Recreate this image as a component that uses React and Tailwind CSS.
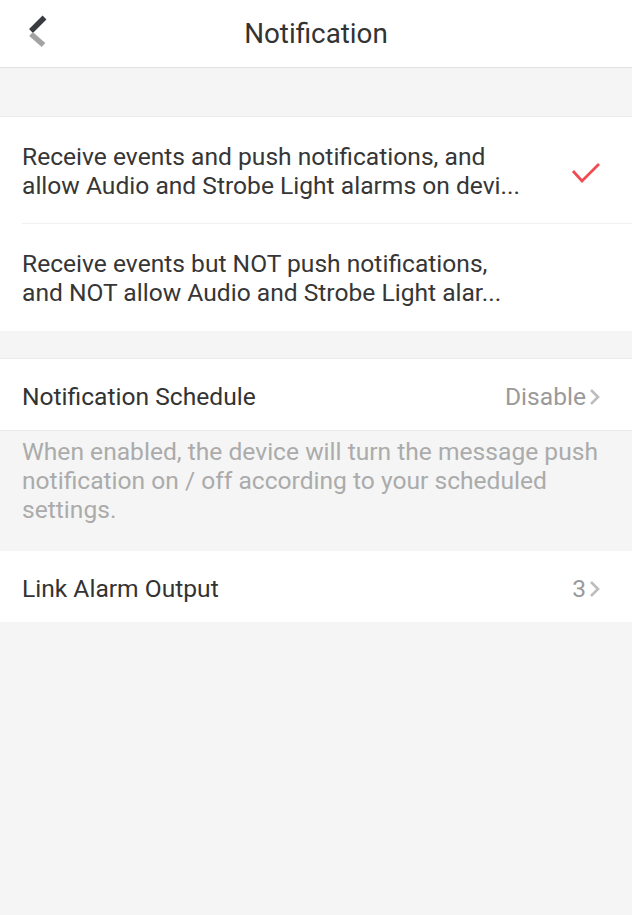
import React from "react";

const Chevron = () => (
  <svg width="14" height="20" viewBox="0 0 14 20" className="ml-[2px]">
    <path d="M3 3 L10 10 L3 17" fill="none" stroke="#bdbdbd" strokeWidth="2.6" />
  </svg>
);

const OptionRow = ({ lines, checked, divider }) => (
  <div className="relative flex h-[107px] items-center bg-white pl-[22px] pr-[30px]">
    <p className="flex-1 text-[24.6px] leading-[29px] text-[#363636]">
      {lines[0]}
      <br />
      {lines[1]}
    </p>
    {checked && (
      <svg width="32" height="28" viewBox="0 0 32 28">
        <path d="M3 14 L12 24 L29 7" fill="none" stroke="#f04b51" strokeWidth="2.8" />
      </svg>
    )}
    {divider && <div className="absolute bottom-0 left-[22px] right-0 h-px bg-[#f1f1f1]" />}
  </div>
);

const App = () => {
  return (
    <div className="min-h-[915px] bg-[#f5f5f5] font-['Roboto',sans-serif]">
      {/* header */}
      <header className="relative flex h-[68px] items-center justify-center border-b border-[#e2e2e2] bg-white">
        <svg width="24" height="34" viewBox="0 0 24 34" className="absolute left-[25px] top-[15px]">
          <path d="M19.5 2.5 L6 16" stroke="#3a3b40" strokeWidth="5.5" />
          <path d="M6 19 L18.5 30" stroke="#a3a3a6" strokeWidth="5.5" />
        </svg>
        <h1 className="text-[27.8px] text-[#333]">Notification</h1>
      </header>

      <div className="h-[49px] border-b border-[#ebebeb]" />

      <OptionRow
        checked
        divider
        lines={[
          "Receive events and push notifications, and",
          "allow Audio and Strobe Light alarms on devi...",
        ]}
      />
      <OptionRow
        lines={[
          "Receive events but NOT push notifications,",
          "and NOT allow Audio and Strobe Light alar...",
        ]}
      />

      <div className="h-[28px] border-b border-[#ebebeb]" />

      <div className="flex h-[72px] items-center justify-between border-b border-[#e8e8e8] bg-white pl-[22px] pr-[30px] pt-[5px]">
        <span className="text-[24.6px] text-[#333]">Notification Schedule</span>
        <div className="flex items-center">
          <span className="text-[24.6px] text-[#9a9a9a]">Disable</span>
          <Chevron />
        </div>
      </div>

      <p className="h-[120px] px-[22px] pt-[6px] text-[24.6px] leading-[29px] text-[#ababab]">
        When enabled, the device will turn the message push notification on / off according to your scheduled
        settings.
      </p>

      <div className="flex h-[71px] items-center justify-between bg-white pl-[22px] pr-[30px] pt-[5px]">
        <span className="text-[24.6px] text-[#333]">Link Alarm Output</span>
        <div className="flex items-center">
          <span className="text-[24.6px] text-[#9a9a9a]">3</span>
          <Chevron />
        </div>
      </div>
    </div>
  );
};

export default App;
